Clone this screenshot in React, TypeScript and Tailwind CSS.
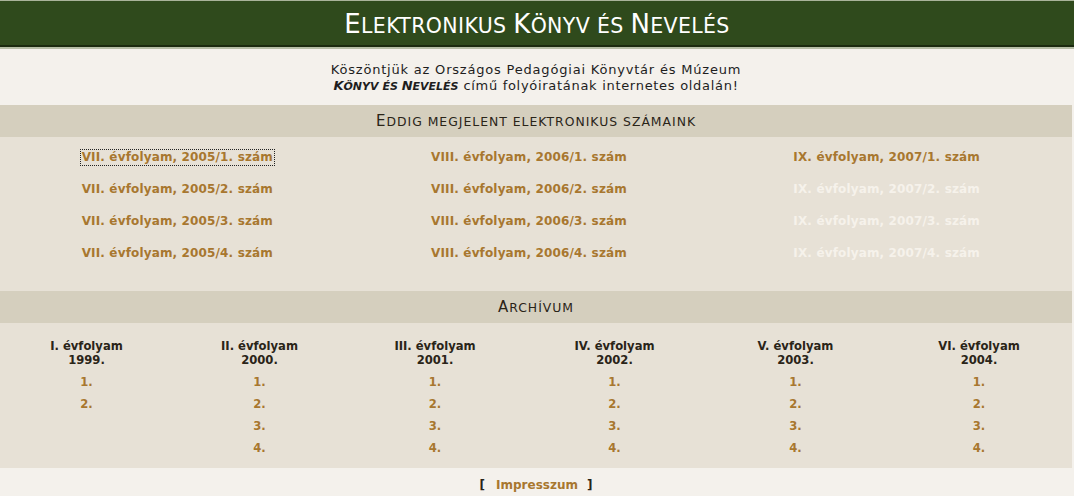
import React from "react";

const font = { fontFamily: '"DejaVu Sans", Verdana, sans-serif' };

const current = [
  ["VII. évfolyam, 2005/1. szám", "VII. évfolyam, 2005/2. szám", "VII. évfolyam, 2005/3. szám", "VII. évfolyam, 2005/4. szám"],
  ["VIII. évfolyam, 2006/1. szám", "VIII. évfolyam, 2006/2. szám", "VIII. évfolyam, 2006/3. szám", "VIII. évfolyam, 2006/4. szám"],
  ["IX. évfolyam, 2007/1. szám", "IX. évfolyam, 2007/2. szám", "IX. évfolyam, 2007/3. szám", "IX. évfolyam, 2007/4. szám"],
];

const archive = [
  { t: "I. évfolyam", y: "1999.", n: 2 },
  { t: "II. évfolyam", y: "2000.", n: 4 },
  { t: "III. évfolyam", y: "2001.", n: 4 },
  { t: "IV. évfolyam", y: "2002.", n: 4 },
  { t: "V. évfolyam", y: "2003.", n: 4 },
  { t: "VI. évfolyam", y: "2004.", n: 4 },
];

function SmallCaps({ text, big, small }: { text: string; big: string; small: string }) {
  const parts: React.ReactNode[] = [];
  const chars = Array.from(text);
  let buf = "";
  let bufBig = false;
  const flush = (k: number) => {
    if (!buf) return;
    parts.push(
      <span key={k} className={bufBig ? big : small}>
        {buf.toUpperCase()}
      </span>
    );
    buf = "";
  };
  chars.forEach((c, i) => {
    const isBig = c !== c.toLowerCase();
    if (isBig !== bufBig) {
      flush(i);
      bufBig = isBig;
    }
    buf += c;
  });
  flush(chars.length);
  return <>{parts}</>;
}

export default function App() {
  return (
    <div className="w-[1074px] h-[496px] overflow-hidden bg-[#f4f1ec]" style={font}>
      <div className="h-px bg-[#a9b39a]" />
      <div className="h-[44px] bg-[#2f4a1c] flex items-center justify-center">
        <h1 className="text-white font-normal leading-none tracking-[0.35px] pt-[2px]">
          <SmallCaps text="Elektronikus Könyv és Nevelés" big="text-[26px]" small="text-[20.5px]" />
        </h1>
      </div>
      <div className="h-[2px] bg-[#1b2b0f]" />
      <div className="h-[2px] bg-[#b6bea6]" />
      <div className="w-[1072px]">
        <div className="h-[56px] flex flex-col items-center justify-center text-[13px] leading-[16px] tracking-[0.8px] text-[#1e1e1e] pt-[2px]">
          <p>Köszöntjük az Országos Pedagógiai Könyvtár és Múzeum</p>
          <p className="tracking-[0.7px]">
            <span className="italic font-bold tracking-[0px]">
              <SmallCaps text="Könyv és Nevelés" big="text-[13px]" small="text-[11px]" />
            </span>{" "}
            című folyóiratának internetes oldalán!
          </p>
        </div>
        <div className="h-[32px] bg-[#d5cfbe] flex items-center justify-center text-[#2a2418] tracking-[1px] leading-none">
          <span>
            <SmallCaps text="Eddig megjelent elektronikus számaink" big="text-[15px]" small="text-[12.4px]" />
          </span>
        </div>
        <div className="bg-[#e7e1d6] h-[154px] grid grid-cols-3 pt-[4px] pr-[8px]">
          {current.map((col, ci) => (
            <div key={ci} className="flex flex-col items-center">
              {col.map((l, li) => {
                const faded = ci === 2 && li > 0;
                return (
                  <div key={li} className={"h-[32px] flex items-center " + (ci === 1 ? "pr-[6px]" : "")}>
                    <span
                      className={
                        "text-[12px] font-bold leading-[15px] tracking-[0.15px] px-[1px] " +
                        (faded ? "text-[#f6f2eb]" : "text-[#a8772f]") +
                        (ci === 0 && li === 0 ? " outline outline-1 outline-dotted outline-[#222]" : "")
                      }
                    >
                      {l}
                    </span>
                  </div>
                );
              })}
            </div>
          ))}
        </div>
        <div className="h-[32px] bg-[#d5cfbe] flex items-center justify-center text-[#2a2418] tracking-[1px] leading-none">
          <span>
            <SmallCaps text="Archívum" big="text-[15px]" small="text-[12.4px]" />
          </span>
        </div>
        <div className="bg-[#e7e1d6] h-[145px] grid grid-cols-[173px_173px_178px_181px_181px_1fr] pt-[16px]">
          {archive.map((a, i) => (
            <div key={i} className="flex flex-col items-center text-[11.6px] font-bold">
              <div className="text-[#2a2418] leading-[14px] text-center">
                {a.t}
                <br />
                {a.y}
              </div>
              <div className="flex flex-col items-center pt-[5px]">
                {Array.from({ length: a.n }).map((_, k) => (
                  <div key={k} className="h-[22px] flex items-center text-[#a8772f]">
                    {k + 1}.
                  </div>
                ))}
              </div>
            </div>
          ))}
        </div>
        <div className="h-[28px] flex items-center justify-center text-[12px] font-bold pt-[6px]">
          <span className="text-[#2a2418]">[</span>
          <span className="text-[#a8772f] ml-[11px] mr-[9px]">Impresszum</span>
          <span className="text-[#2a2418]">]</span>
        </div>
      </div>
    </div>
  );
}
